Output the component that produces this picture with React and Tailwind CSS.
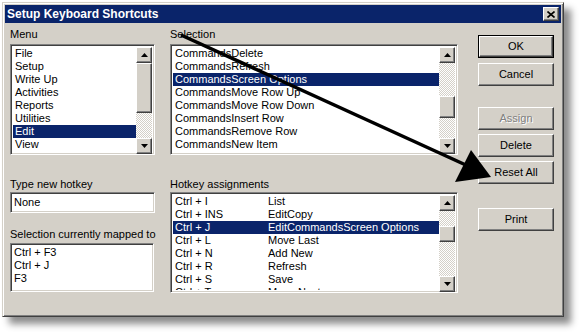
// Setup Keyboard Shortcuts dialog (Windows classic look)

const raised =
  "border border-t-white border-l-white border-r-[#404040] border-b-[#404040] shadow-[inset_-1px_-1px_0_#808080] bg-[#d4d0c8]";
const sunken =
  "border border-t-[#808080] border-l-[#808080] border-r-white border-b-white shadow-[inset_1px_1px_0_#404040,inset_-1px_-1px_0_#d4d0c8]";
const track =
  "bg-[repeating-conic-gradient(#d4d0c8_0%_25%,#ffffff_0%_50%)] bg-size-[2px_2px]";

function ArrowBtn({ down }) {
  return (
    <div className={`h-[16px] w-[16px] shrink-0 flex items-center justify-center ${raised}`}>
      <svg width="7" height="4" viewBox="0 0 7 4">
        {down ? <polygon points="0,0 7,0 3.5,4" fill="#000" /> : <polygon points="3.5,0 7,4 0,4" fill="#000" />}
      </svg>
    </div>
  );
}

// parts: array of ["t"|"b", height]
function ScrollBar({ parts }) {
  return (
    <div className="w-[16px] flex flex-col shrink-0">
      <ArrowBtn />
      {parts.map(([kind, h], i) => (
        <div
          key={i}
          style={{ height: h }}
          className={kind === "b" ? `shrink-0 ${raised}` : `shrink-0 ${track}`}
        />
      ))}
      <ArrowBtn down />
    </div>
  );
}

function ListBox({ items, selected, className, parts, render }) {
  return (
    <div className={`bg-white flex p-[2px] ${sunken} ${className}`}>
      <div className="flex-1 overflow-hidden">
        {items.map((it, i) => (
          <div
            key={i}
            className={`h-[13px] leading-[13px] pl-[2px] whitespace-nowrap ${
              i === selected ? "bg-[#0a246a] text-white" : "text-black"
            }`}
          >
            {render ? render(it) : it}
          </div>
        ))}
      </div>
      <ScrollBar parts={parts} />
    </div>
  );
}

function Button({ children, isDefault, disabled, className = "" }) {
  const label = (
    <span className={disabled ? "text-[#808080] [text-shadow:1px_1px_0_#ffffff]" : "text-black"}>
      {children}
    </span>
  );
  if (isDefault) {
    return (
      <div className={`h-[23px] w-[76px] border border-black flex ${className}`}>
        <div className={`flex-1 flex items-center justify-center ${raised}`}>{label}</div>
      </div>
    );
  }
  return (
    <div className={`h-[23px] w-[76px] flex items-center justify-center ${raised} ${className}`}>
      {label}
    </div>
  );
}

const Label = ({ children, className = "" }) => (
  <div className={`h-[13px] leading-[13px] text-black whitespace-nowrap ${className}`}>{children}</div>
);

export default function App() {
  const menu = ["File", "Setup", "Write Up", "Activities", "Reports", "Utilities", "Edit", "View", "Window"];
  const selection = [
    "CommandsDelete",
    "CommandsRefresh",
    "CommandsScreen Options",
    "CommandsMove Row Up",
    "CommandsMove Row Down",
    "CommandsInsert Row",
    "CommandsRemove Row",
    "CommandsNew Item",
    "CommandsEdit Screen",
  ];
  const hotkeys = [
    ["Ctrl + I", "List"],
    ["Ctrl + INS", "EditCopy"],
    ["Ctrl + J", "EditCommandsScreen Options"],
    ["Ctrl + L", "Move Last"],
    ["Ctrl + N", "Add New"],
    ["Ctrl + R", "Refresh"],
    ["Ctrl + S", "Save"],
    ["Ctrl + T", "Move Next"],
  ];

  return (
    <div className="relative w-[580px] h-[332px] bg-white overflow-hidden font-['Liberation_Sans',Arial,sans-serif] text-[11px]">
      {/* ── Window ── */}
      <div
        className="ml-[2px] mt-[2px] w-[562px] h-[315px] bg-[#d4d0c8] p-[2px] flex flex-col
                   border border-t-[#d4d0c8] border-l-[#d4d0c8] border-r-[#404040] border-b-[#404040]
                   shadow-[inset_1px_1px_0_#ffffff,inset_-1px_-1px_0_#808080,7px_7px_7px_rgba(0,0,0,0.45)]"
      >
        {/* Title bar */}
        <div className="h-[18px] shrink-0 bg-[#0a246a] flex items-center justify-between pl-[2px] pr-[2px]">
          <span className="text-white font-bold text-[12px] leading-[18px] whitespace-nowrap">
            Setup Keyboard Shortcuts
          </span>
          <div className={`h-[14px] w-[16px] flex items-center justify-center ${raised}`}>
            <svg width="8" height="7" viewBox="0 0 8 7">
              <path d="M0.5 0.5 L7.5 6.5 M7.5 0.5 L0.5 6.5" stroke="#000" strokeWidth="1.6" />
            </svg>
          </div>
        </div>

        {/* Body */}
        <div className="flex pl-[5px] pt-[5px]">
          {/* Left column */}
          <div className="w-[145px] flex flex-col">
            <Label>Menu</Label>
            <ListBox
              className="mt-[3px] h-[111px]"
              items={menu}
              selected={6}
              parts={[["b", 50], ["t", 25]]}
            />
            <Label className="mt-[23px]">Type new hotkey</Label>
            <div className={`mt-[1px] h-[21px] bg-white pl-[2px] flex items-center ${sunken}`}>
              <span className="pl-[1px] text-black">None</span>
            </div>
            <Label className="mt-[15px]">Selection currently mapped to</Label>
            <div className={`mt-[2px] h-[49px] w-[144px] bg-white p-[2px] ${sunken}`}>
              {["Ctrl + F3", "Ctrl + J", "F3"].map((k) => (
                <div key={k} className="h-[13px] leading-[13px] pl-[1px] text-black">
                  {k}
                </div>
              ))}
            </div>
          </div>

          {/* Middle column */}
          <div className="ml-[15px] w-[288px] flex flex-col">
            <Label>Selection</Label>
            <ListBox
              className="mt-[3px] h-[111px]"
              items={selection}
              selected={2}
              parts={[["t", 33], ["b", 22], ["t", 20]]}
            />
            <Label className="mt-[23px]">Hotkey assignments</Label>
            <ListBox
              className="mt-[1px] h-[101px]"
              items={hotkeys}
              selected={2}
              parts={[["t", 15], ["b", 16], ["t", 34]]}
              render={([k, v]) => (
                <div className="flex">
                  <span className="w-[93px] shrink-0">{k}</span>
                  <span>{v}</span>
                </div>
              )}
            />
          </div>

          {/* Right column: buttons */}
          <div className="ml-[20px] w-[76px] flex flex-col">
            <Button isDefault className="mt-[7px]">OK</Button>
            <Button className="mt-[5px]">Cancel</Button>
            <Button disabled className="mt-[21px]">Assign</Button>
            <Button className="mt-[4px]">Delete</Button>
            <Button className="mt-[4px]">Reset All</Button>
            <Button className="mt-[24px]">Print</Button>
          </div>
        </div>
      </div>

      {/* Annotation arrow drawn over the dialog */}
      <svg className="absolute inset-0 pointer-events-none" width="580" height="332" viewBox="0 0 580 332">
        <line x1="181" y1="35" x2="468" y2="166" stroke="#000" strokeWidth="3.5" />
        <polygon points="491,177 455,182 471,150" fill="#000" />
      </svg>
    </div>
  );
}
